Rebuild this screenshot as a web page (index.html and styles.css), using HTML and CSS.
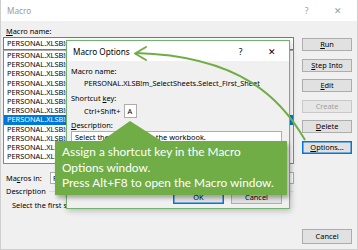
FILE: index.html
```html
<!DOCTYPE html>
<html>
<head>
<meta charset="utf-8">
<link rel="stylesheet" href="styles.css">
</head>
<body>
<div class="win">
  <div class="titlebar">
    <span class="title">Macro</span>
    <span class="tb-btn">?</span>
    <span class="tb-btn tb-x">✕</span>
  </div>
  <div class="body">
    <div class="left">
      <div class="label"><u>M</u>acro name:</div>
      <div class="input">PERSONAL.XLSB!m_SelectSheets.Select_First_Sheet</div>
      <div class="list">
        <div class="row">PERSONAL.XLSB!m_AutoFitColumns</div>
        <div class="row">PERSONAL.XLSB!m_ClearFilters</div>
        <div class="row">PERSONAL.XLSB!m_CopyValues</div>
        <div class="row">PERSONAL.XLSB!m_FormatTable</div>
        <div class="row">PERSONAL.XLSB!m_HideSheets</div>
        <div class="row">PERSONAL.XLSB!m_PasteValues</div>
        <div class="row">PERSONAL.XLSB!m_RefreshAll</div>
        <div class="row sel">PERSONAL.XLSB!m_SelectSheets.Select_First_Sheet</div>
        <div class="row">PERSONAL.XLSB!m_SelectSheets.Select_Last_Sheet</div>
        <div class="row">PERSONAL.XLSB!m_SortSheets</div>
        <div class="row">PERSONAL.XLSB!m_UnhideSheets</div>
        <div class="row">PERSONAL.XLSB!m_ZoomAll</div>
      </div>
      <div class="macros-in">
        <span class="mi-label">Ma<u>c</u>ros in:</span>
        <div class="combo">PERSONAL.XLSB</div>
      </div>
      <div class="group">
        <span>Description</span>
        <span class="gline"></span>
      </div>
      <div class="desc-text">Select the first sheet in the workbook.</div>
    </div>
    <div class="buttons">
      <div class="btn"><u>R</u>un</div>
      <div class="btn"><u>S</u>tep Into</div>
      <div class="btn"><u>E</u>dit</div>
      <div class="btn disabled">Create</div>
      <div class="btn"><u>D</u>elete</div>
      <div class="btn default"><u>O</u>ptions...</div>
      <div class="btn cancel">Cancel</div>
    </div>
  </div>
</div>

<div class="opt">
  <div class="opt-title">
    <span class="title">Macro Options</span>
    <span class="tb-btn">?</span>
    <span class="tb-btn tb-x">✕</span>
  </div>
  <div class="opt-body">
    <div class="olabel">Macro name:</div>
    <div class="opath">PERSONAL.XLSB!m_SelectSheets.Select_First_Sheet</div>
    <div class="olabel sk">Shortcut <u>k</u>ey:</div>
    <div class="skrow">
      <span>Ctrl+Shift+</span>
      <span class="keybox">A</span>
    </div>
    <div class="olabel"><u>D</u>escription:</div>
    <div class="textarea">Select the first sheet in the workbook.</div>
    <div class="obtns">
      <div class="btn default">OK</div>
      <div class="btn">Cancel</div>
    </div>
  </div>
</div>

<div class="callout">
  <p>Assign a shortcut key in the Macro<br>Options window.</p>
  <p>Press Alt+F8 to open the Macro window.</p>
</div>

<svg class="overlay" width="358" height="250" viewBox="0 0 358 250">
  <polygon points="130,121 100,142 163,142" fill="#70ad47"/>
  <path d="M305,140 C282,100 242,56 136,53" fill="none" stroke="#70ad47" stroke-width="2"/>
  <path d="M146,47 L135,53.5 L146,60" fill="none" stroke="#70ad47" stroke-width="2" stroke-linecap="round" stroke-linejoin="round"/>
</svg>
</body>
</html>
```
FILE: styles.css
```css
* { box-sizing: border-box; }
html, body { margin: 0; padding: 0; }
body {
  width: 358px;
  height: 250px;
  overflow: hidden;
  position: relative;
  font-family: "Noto Sans", "Open Sans", sans-serif;
  font-size: 7.4px;
  color: #000;
  background: #f0f0f0;
}
u { text-decoration-thickness: 0.6px; text-underline-offset: 1px; }

.win {
  width: 358px;
  height: 250px;
  border: 1px solid #cfcfcf;
  border-top: none;
  display: flex;
  flex-direction: column;
  background: #f0f0f0;
}
.titlebar {
  height: 21px;
  flex: none;
  background: #fff;
  display: flex;
  align-items: center;
  padding-left: 6px;
  padding-right: 4px;
  color: #9b9b9b;
  font-size: 8.2px;
}
.title { flex: 1; }
.tb-btn { width: 31px; text-align: center; font-size: 8.5px; }
.tb-x { font-size: 9px; }

.body {
  flex: 1;
  display: flex;
  padding: 4px 5px 0 2px;
  gap: 8px;
}
.left {
  width: 292px;
  display: flex;
  flex-direction: column;
}
.label { height: 12px; line-height: 12px; padding-left: 3px; }
.input {
  height: 13px;
  border: 1px solid #7a7a7a;
  background: #fff;
  padding-left: 3px;
  line-height: 11px;
  white-space: nowrap;
  overflow: hidden;
}
.list {
  height: 114px;
  border: 1px solid #828790;
  border-top-color: #adadad;
  background: #fff;
  overflow: hidden;
}
.row {
  height: 9.2px;
  line-height: 9.2px;
  padding-left: 3px;
  white-space: nowrap;
}
.row.sel { background: #0078d7; color: #fff; }

.macros-in {
  display: flex;
  align-items: center;
  margin-top: 8px;
  height: 12px;
  padding-left: 3px;
}
.mi-label { width: 44px; }
.combo {
  flex: 1;
  height: 12px;
  border: 1px solid #adadad;
  background: #fff;
  padding-left: 2px;
  line-height: 10px;
}
.group {
  display: flex;
  align-items: center;
  gap: 3px;
  margin-top: 1px;
  height: 12px;
  padding-left: 3px;
}
.gline { flex: 1; height: 1px; background: #dcdcdc; }
.desc-text { padding-left: 9px; margin-top: 2px; line-height: 12px; }

.buttons {
  width: 50px;
  display: flex;
  flex-direction: column;
  gap: 7.5px;
  padding-top: 13px;
  padding-bottom: 5px;
}
.btn {
  height: 13px;
  border: 1px solid #adadad;
  background: #e1e1e1;
  text-align: center;
  line-height: 11px;
}
.btn.disabled { color: #a0a0a0; border-color: #c8c8c8; background: #e6e6e6; }
.btn.default { border-color: #0078d7; background: #e1e1e1; box-shadow: inset 0 0 0 0.5px #0078d7; }
.btn.cancel { margin-top: auto; height: 15px; line-height: 13px; }

.opt {
  position: absolute;
  left: 66px;
  top: 40px;
  width: 224px;
  height: 169px;
  border: 1px solid #6fb36f;
  background: #f0f0f0;
  box-shadow: 1px 2px 6px rgba(0,0,0,0.22);
  display: flex;
  flex-direction: column;
}
.opt-title {
  height: 20px;
  flex: none;
  background: #fff;
  display: flex;
  align-items: center;
  padding-left: 6px;
  padding-right: 2px;
  font-size: 8.2px;
  color: #000;
}
.opt-body {
  flex: 1;
  display: flex;
  flex-direction: column;
  padding: 4px 4px 0 4px;
}
.olabel { line-height: 12px; height: 12px; }
.olabel.sk { margin-top: 3px; }
.opath { line-height: 12px; height: 12px; padding-left: 13px; white-space: nowrap; }
.skrow {
  display: flex;
  align-items: center;
  gap: 3px;
  padding-left: 13px;
  height: 14px;
  margin-bottom: 1px;
}
.keybox {
  width: 13px;
  height: 14px;
  border: 1px solid #adadad;
  background: #fff;
  line-height: 12px;
  padding-left: 3px;
}
.textarea {
  height: 52px;
  margin-top: 0;
  border: 1px solid #adadad;
  background: #fff;
  padding-left: 3px;
  line-height: 10px;
  margin-right: 3px;
}
.obtns {
  display: flex;
  justify-content: flex-end;
  gap: 7px;
  margin-top: 8px;
  padding-right: 3px;
}
.obtns .btn { width: 51px; }

.callout {
  position: absolute;
  left: 55px;
  top: 141px;
  width: 232px;
  height: 54px;
  background: #70ad47;
  color: #fff;
  box-shadow: 2px 3px 4px rgba(0,0,0,0.3);
  padding: 3px 7px;
  font-family: "Lato", "Open Sans", sans-serif;
  font-size: 11.85px;
  line-height: 15.5px;
  white-space: nowrap;
}
.callout p { margin: 0; }

.overlay {
  position: absolute;
  left: 0;
  top: 0;
  pointer-events: none;
}
```
